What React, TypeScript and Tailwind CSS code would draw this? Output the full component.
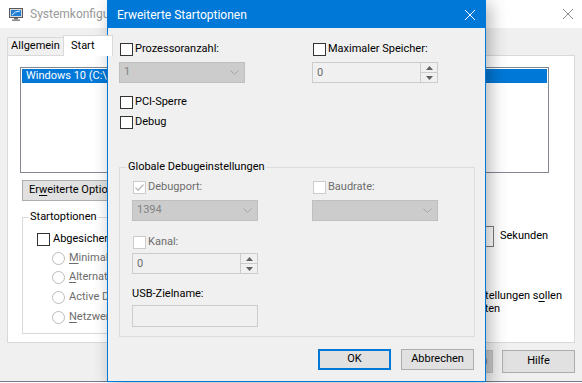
import React from "react";

type CheckProps = { label: string; checked?: boolean; disabled?: boolean; className?: string };

// Windows-style checkbox with label
function Check({ label, checked, disabled, className = "" }: CheckProps) {
  return (
    <div className={`flex h-[18px] items-center gap-[2px] ${className}`}>
      <span
        className={`ml-[1px] flex h-[13px] w-[13px] shrink-0 items-center justify-center border bg-white ${
          disabled ? "border-[#cccccc]" : "border-[#333333]"
        }`}
      >
        {checked && (
          <svg width="11" height="11" viewBox="0 0 11 11">
            <path d="M1.5 5.5 L4.2 8.2 L9.5 2.5" fill="none" stroke="#bcbcbc" strokeWidth="1.3" />
          </svg>
        )}
      </span>
      <span className={disabled ? "text-[#6d6d6d]" : "text-black"}>{label}</span>
    </div>
  );
}

function Combo({ value, className = "" }: { value: string; className?: string }) {
  return (
    <div
      className={`flex h-[21px] w-[126px] items-center justify-between border border-[#bfbfbf] bg-[#cccccc] pl-[4px] pr-[5px] text-[#838383] ${className}`}
    >
      <span>{value}</span>
      <svg width="9" height="5" viewBox="0 0 9 5">
        <path d="M0.5 0.5 L4.5 4.5 L8.5 0.5" fill="none" stroke="#a6a6a6" />
      </svg>
    </div>
  );
}

function Spin({ value, className = "" }: { value: string; className?: string }) {
  return (
    <div className={`flex h-[21px] w-[126px] border border-[#cccccc] bg-[#f0f0f0] ${className}`}>
      <span className="flex-1 pl-[4px] leading-[19px] text-[#6d6d6d]">{value}</span>
      <div className="flex w-[17px] flex-col border-l border-[#cccccc]">
        <div className="flex flex-1 items-center justify-center border-b border-[#cccccc]">
          <svg width="7" height="4" viewBox="0 0 7 4">
            <path d="M0 4 L3.5 0 L7 4 Z" fill="#606060" />
          </svg>
        </div>
        <div className="flex flex-1 items-center justify-center">
          <svg width="7" height="4" viewBox="0 0 7 4">
            <path d="M0 0 L3.5 4 L7 0 Z" fill="#606060" />
          </svg>
        </div>
      </div>
    </div>
  );
}

function Radio({ children, className = "" }: { children: React.ReactNode; className?: string }) {
  return (
    <div className={`flex items-center gap-[4px] pl-[15px] text-[#6d6d6d] ${className}`}>
      <span className="h-[13px] w-[13px] shrink-0 rounded-full border border-[#bcbcbc] bg-white" />
      <span>{children}</span>
    </div>
  );
}

function WinButton({ children, disabled }: { children: React.ReactNode; disabled?: boolean }) {
  const cls = disabled
    ? "border border-[#bfbfbf] bg-[#cccccc] text-[#838383]"
    : "border border-[#adadad] bg-[#e1e1e1] text-black";
  return <div className={`flex h-[23px] w-[73px] items-center justify-center ${cls}`}>{children}</div>;
}

export default function App() {
  return (
    <div className="relative h-[383px] w-[582px] overflow-hidden bg-white text-[11px] [font-family:Roboto,'Liberation_Sans',sans-serif]">
      {/* Hintergrundfenster: Systemkonfiguration */}
      <div className="h-[382px] border-b border-[#6f7c89] bg-[#f0f0f0]">
        <div className="flex h-[28px] items-center bg-white">
          <svg className="ml-[9px]" width="14" height="14" viewBox="0 0 14 14">
            <rect x="0.5" y="1.5" width="13" height="9" fill="#d8d8d8" stroke="#5a5a5a" />
            <rect x="2" y="3" width="10" height="6" fill="#1e7fd8" />
            <path d="M3 8 Q6 4 11 4" fill="none" stroke="#e8f4ff" strokeWidth="1" />
            <rect x="5" y="11" width="4" height="1.5" fill="#6a6a6a" />
            <rect x="3" y="12.5" width="8" height="1.5" fill="#8a8a8a" />
          </svg>
          <span className="ml-[7px] text-[12px] text-[#999999]">Systemkonfiguration</span>
          <svg className="ml-auto mr-[9px]" width="10" height="10" viewBox="0 0 10 10">
            <path d="M0 0 L10 10 M10 0 L0 10" stroke="#8a8a8a" strokeWidth="1" />
          </svg>
        </div>

        <div className="px-[7px] pt-[7px]">
          <div className="flex h-[20px] items-end">
            <div className="flex h-[18px] w-[57px] items-center justify-center border border-b-0 border-[#d9d9d9] bg-[#f0f0f0]">
              Allgemein
            </div>
            <div className="relative z-10 -mb-px -ml-px flex h-[21px] w-[50px] items-center border border-b-0 border-[#d9d9d9] bg-white pl-[7px]">
              Start
            </div>
            <div className="flex h-[18px] w-[60px] items-center justify-center border border-b-0 border-l-0 border-[#d9d9d9] bg-[#f0f0f0]">
              Dienste
            </div>
          </div>

          <div className="h-[288px] border border-[#d9d9d9] bg-white px-[12px] pt-[11px]">
            <div className="h-[106px] w-[529px] border border-[#828790] p-[1px]">
              <div className="flex h-[14px] items-center bg-[#0078d7] pl-[4px] text-white">
                Windows 10 (C:\Windows) : Aktuelles Betriebssystem
              </div>
            </div>

            <div className="ml-[2px] mt-[7px] flex h-[21px] w-[124px] items-center border border-[#adadad] bg-[#e1e1e1] pl-[6px]">
              Er<u className="underline-offset-2">w</u>eiterte Optionen...
            </div>

            <div className="ml-[2px] mt-[9px] flex">
              <fieldset className="h-[124px] w-[300px] border border-[#d9d9d9]">
                <legend className="ml-[6px] px-[1px] leading-[14px]">Startoptionen</legend>
                <div className="pl-[14px]">
                  <div className="mt-[6px] flex h-[18px] items-center gap-[3px]">
                    <span className="h-[13px] w-[13px] border border-[#333333] bg-white" />
                    <span>Abgesicherter Start</span>
                  </div>
                  <Radio className="h-[20px]">
                    <u className="underline-offset-2">M</u>inimal
                  </Radio>
                  <Radio className="h-[19px]">
                    <u className="underline-offset-2">A</u>lternative Shell
                  </Radio>
                  <Radio className="h-[20px]">Active Directory-Reparatur</Radio>
                  <Radio className="h-[20px]">
                    <u className="underline-offset-2">N</u>etzwerk
                  </Radio>
                </div>
              </fieldset>

              <div className="flex-1">
                <div className="ml-[80px] mt-[16px] flex h-[21px] items-center">
                  <span className="w-[52px]">Timeout:</span>
                  <div className="flex h-[21px] w-[41px] items-center border border-[#7a7a7a] bg-white pl-[4px]">30</div>
                  <span className="ml-[6px]">Sekunden</span>
                </div>
                <div className="ml-[83px] mt-[42px] flex gap-[3px] leading-[13px]">
                  <span className="mt-px h-[13px] w-[13px] shrink-0 border border-[#333333] bg-white" />
                  <span className="whitespace-nowrap">
                    Alle Starteinstellungen s<u className="underline-offset-2">o</u>llen
                    <br />
                    dauerhaft gelten
                  </span>
                </div>
              </div>
            </div>
          </div>
        </div>

        <div className="mt-[7px] flex justify-end gap-[9px] pr-[7px]">
          <WinButton>OK</WinButton>
          <WinButton>Abbrechen</WinButton>
          <WinButton disabled>Übernehmen</WinButton>
          <WinButton>Hilfe</WinButton>
        </div>
      </div>

      {/* Dialog: Erweiterte Startoptionen */}
      <div className="absolute left-[107px] top-0 h-[382px] w-[379px] border border-[#0078d7] bg-[#f0f0f0] shadow-[4px_4px_16px_rgba(0,0,0,0.3)]">
        <div className="flex h-[27px] items-center bg-[#0078d7] pl-[9px] text-[12px] text-white">
          <span>Erweiterte Startoptionen</span>
          <svg className="ml-auto mr-[10px]" width="10" height="10" viewBox="0 0 10 10">
            <path d="M0 0 L10 10 M10 0 L0 10" stroke="#ffffff" strokeWidth="1" />
          </svg>
        </div>

        <div className="pl-[11px] pt-[12px]">
          <div className="flex">
            <div className="w-[193px]">
              <Check label="Prozessoranzahl:" />
              <Combo className="mt-[4px]" value="1" />
              <Check className="mt-[10px]" label="PCI-Sperre" />
              <Check className="mt-[2px]" label="Debug" />
            </div>
            <div>
              <Check label="Maximaler Speicher:" />
              <Spin className="mt-[4px]" value="0" />
            </div>
          </div>

          <fieldset className="mt-[29px] h-[177px] w-[356px] border border-[#dcdcdc]">
            <legend className="ml-[7px] px-[1px] leading-[14px]">Globale Debugeinstellungen</legend>
            <div className="mt-[4px] flex pl-[12px]">
              <div className="w-[180px]">
                <Check checked disabled label="Debugport:" />
                <Combo className="mt-[4px]" value="1394" />
                <Check className="mt-[12px]" disabled label="Kanal:" />
                <Spin className="mt-[2px]" value="0" />
                <div className="mt-[13px] h-[14px] leading-[14px]">USB-Zielname:</div>
                <div className="mt-[4px] h-[22px] w-[126px] border border-[#cccccc] bg-[#f0f0f0]" />
              </div>
              <div>
                <Check disabled label="Baudrate:" />
                <Combo className="mt-[4px]" value="" />
              </div>
            </div>
          </fieldset>
        </div>

        <div className="mt-[12px] flex justify-end gap-[10px] pr-[11px]">
          <div className="flex h-[21px] w-[73px] items-center justify-center border-2 border-[#0078d7] bg-[#e1e1e1]">OK</div>
          <div className="flex h-[21px] w-[73px] items-center justify-center border border-[#adadad] bg-[#e1e1e1]">Abbrechen</div>
        </div>
      </div>
    </div>
  );
}
